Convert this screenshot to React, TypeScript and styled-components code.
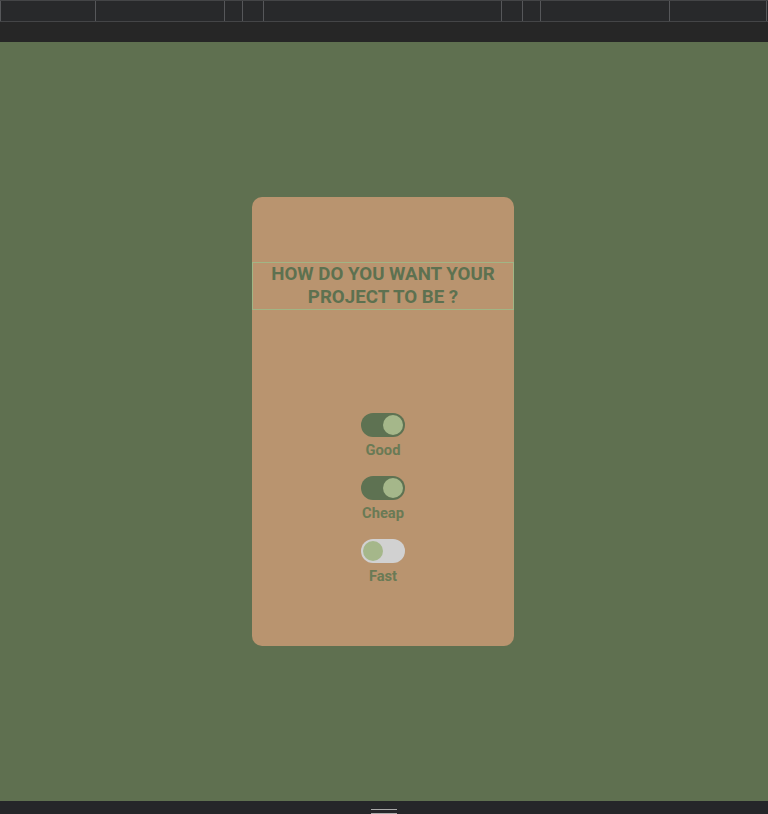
import { useState } from 'react';
import styled, { createGlobalStyle } from 'styled-components';

const GlobalStyle = createGlobalStyle`
  html, body {
    margin: 0;
    padding: 0;
    height: 100%;
    background: #5f7050;
    font-family: Roboto, "Liberation Sans", sans-serif;
  }
  #root {
    height: 100%;
  }
`;

const Page = styled.div`
  height: 814px;
  display: flex;
  flex-direction: column;
  overflow: hidden;
`;

const Toolbar = styled.div`
  height: 20px;
  background: #28292b;
  border-top: 1px solid #444547;
  border-bottom: 1px solid #444547;
  display: flex;
`;

const ToolbarCell = styled.div<{ $w: number }>`
  width: ${(p) => p.$w}px;
  flex: none;
  border-right: 1px solid #56575a;
  box-sizing: border-box;
`;

const SubBar = styled.div`
  height: 20px;
  background: #262626;
`;

const Stage = styled.main`
  flex: 1;
  background: #5f7050;
  display: flex;
  justify-content: center;
  padding: 155px 2px 0 0;
`;

const Card = styled.section`
  width: 262px;
  height: 449px;
  box-sizing: border-box;
  background: #b9946f;
  border-radius: 10px;
  padding-top: 65px;
  display: flex;
  flex-direction: column;
  align-items: center;
`;

const Title = styled.h1`
  margin: 0;
  width: 100%;
  box-sizing: border-box;
  border: 1px solid #a1b585;
  font-size: 18.7px;
  line-height: 23px;
  font-weight: 700;
  color: #5d7150;
  text-align: center;
  padding: 0 8px;
`;

const Options = styled.div`
  margin-top: 103px;
  display: flex;
  flex-direction: column;
  align-items: center;
  gap: 17px;
`;

const Option = styled.label`
  display: flex;
  flex-direction: column;
  align-items: center;
  gap: 4px;
  cursor: pointer;
`;

const Track = styled.span<{ $on: boolean }>`
  width: 44px;
  height: 24px;
  border-radius: 12px;
  box-sizing: border-box;
  padding: 2px;
  background: ${(p) => (p.$on ? '#5e7252' : '#d1d1d1')};
  display: flex;
  justify-content: ${(p) => (p.$on ? 'flex-end' : 'flex-start')};
`;

const Knob = styled.span`
  width: 20px;
  height: 20px;
  border-radius: 50%;
  background: #a5b78a;
`;

const Label = styled.span`
  font-size: 14.7px;
  line-height: 18px;
  font-weight: 700;
  color: #6a7a55;
`;

const BottomBar = styled.div`
  height: 13px;
  box-sizing: border-box;
  background: #252629;
  display: flex;
  justify-content: center;
  align-items: flex-end;
`;

const Handle = styled.div`
  width: 26px;
  height: 5px;
  border-top: 1px solid #a9a9a9;
  border-bottom: 1px solid #a9a9a9;
  box-sizing: border-box;
`;

const cells = [95, 129, 18, 21, 238, 21, 18, 129, 97];

export default function App() {
  const [opts, setOpts] = useState({ Good: true, Cheap: true, Fast: false });

  const toggle = (k: keyof typeof opts) => setOpts((o) => ({ ...o, [k]: !o[k] }));

  return (
    <Page>
      <GlobalStyle />
      <Toolbar>
        <ToolbarCell $w={1} />
        {cells.map((w, i) => (
          <ToolbarCell key={i} $w={w} />
        ))}
      </Toolbar>
      <SubBar />
      <Stage>
        <Card>
          <Title>HOW DO YOU WANT YOUR PROJECT TO BE ?</Title>
          <Options>
            {(Object.keys(opts) as (keyof typeof opts)[]).map((k) => (
              <Option key={k} onClick={() => toggle(k)}>
                <Track $on={opts[k]}>
                  <Knob />
                </Track>
                <Label>{k}</Label>
              </Option>
            ))}
          </Options>
        </Card>
      </Stage>
      <BottomBar>
        <Handle />
      </BottomBar>
    </Page>
  );
}
